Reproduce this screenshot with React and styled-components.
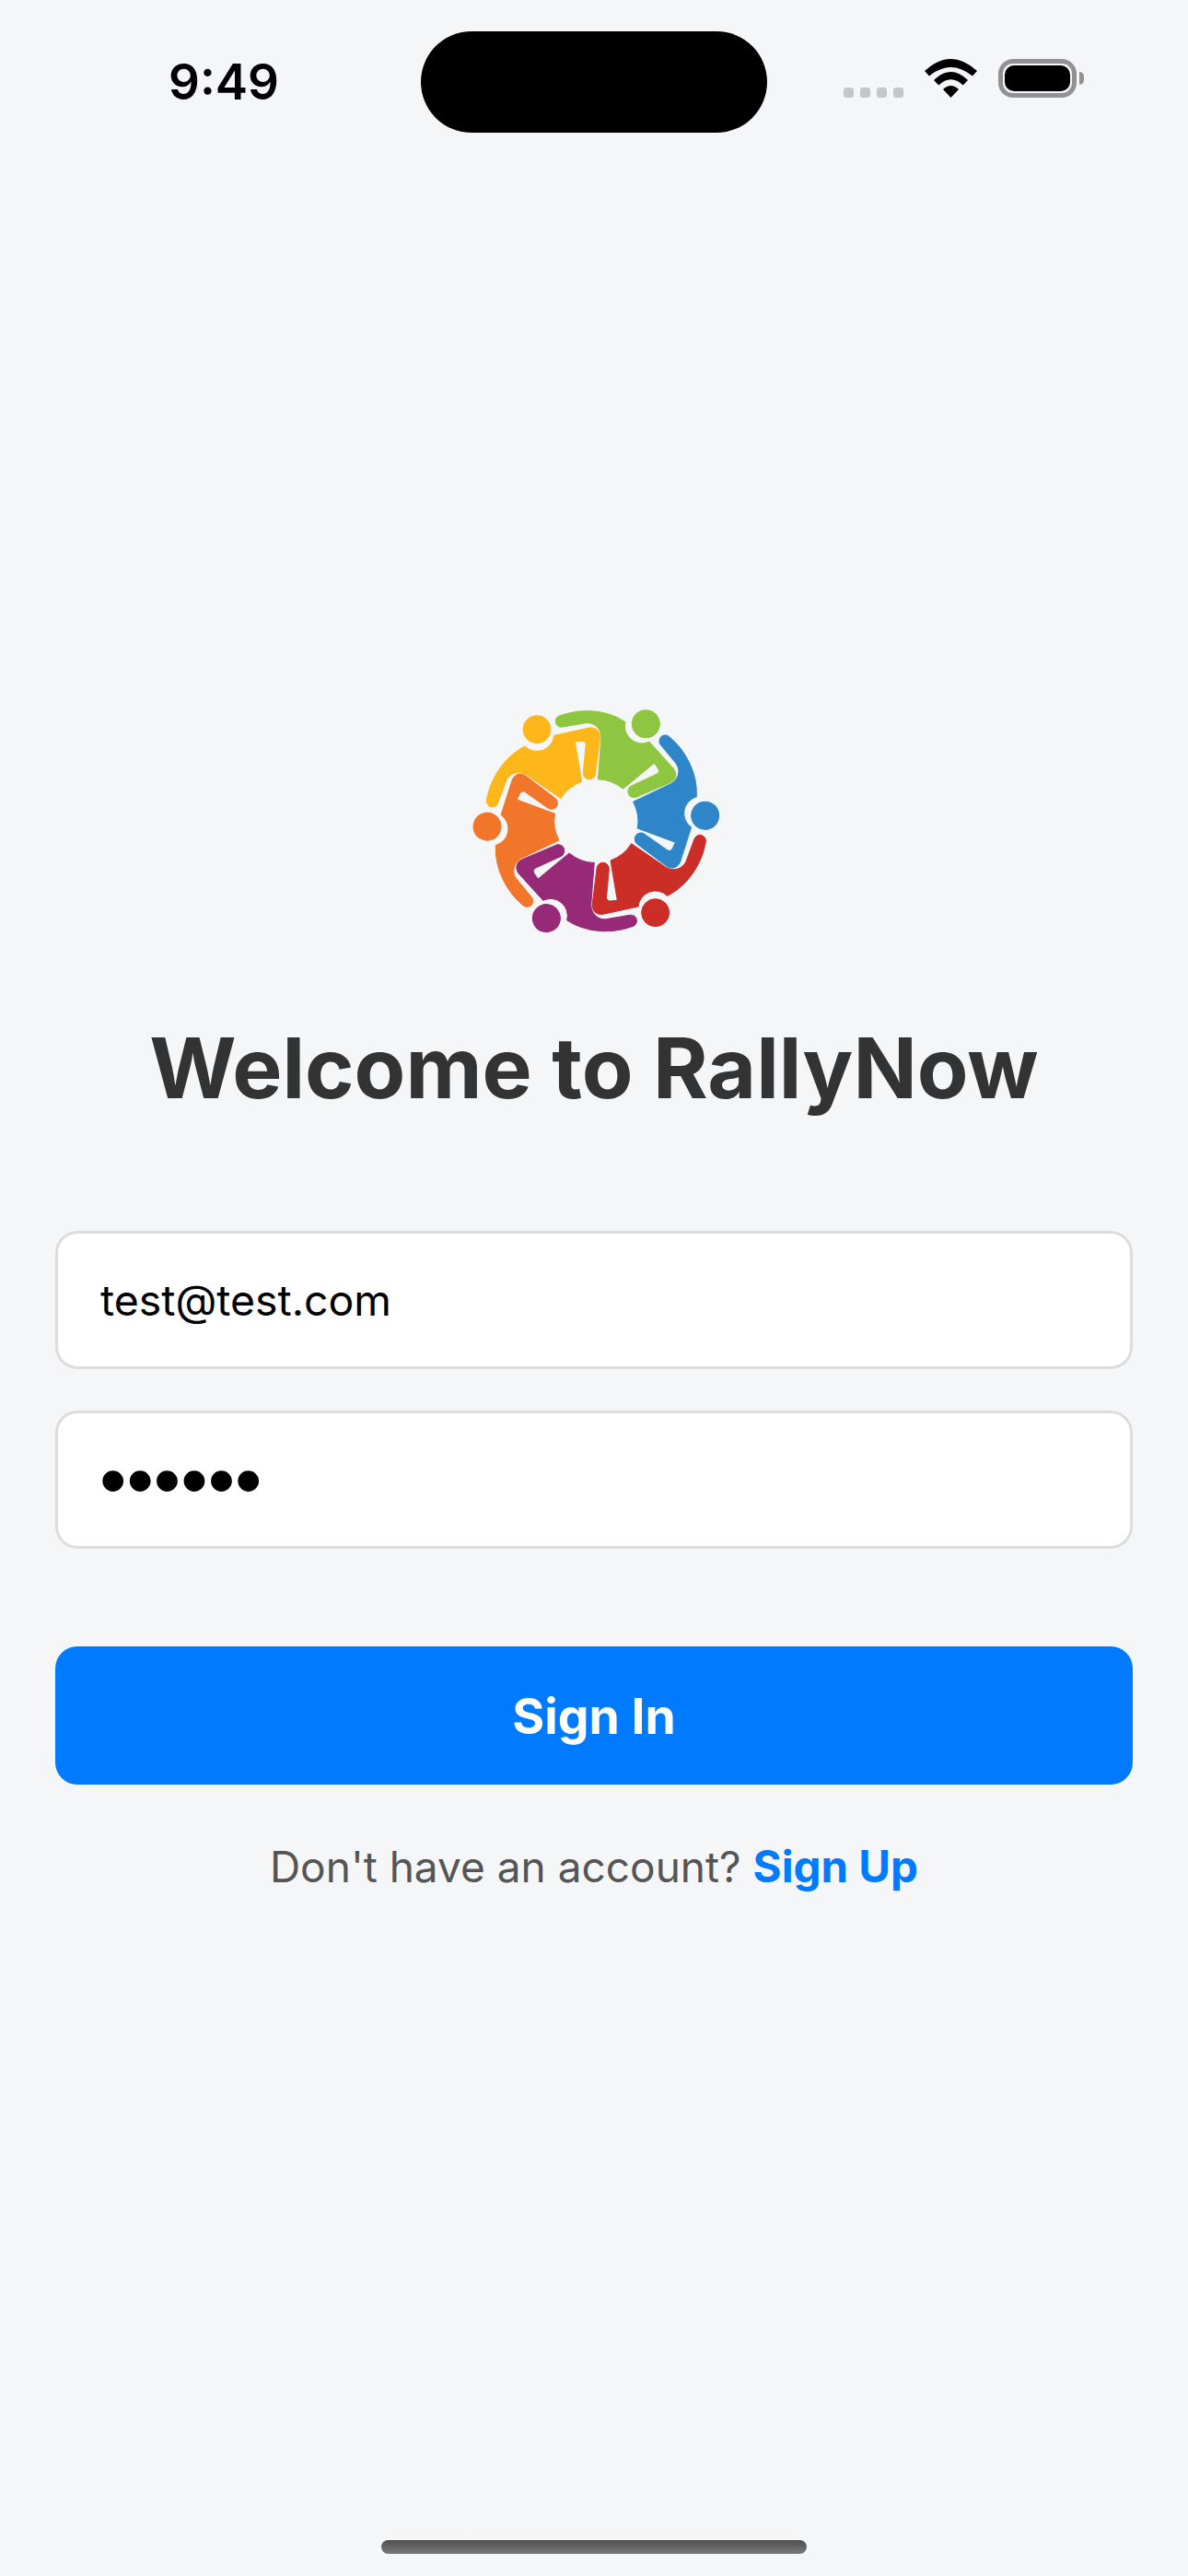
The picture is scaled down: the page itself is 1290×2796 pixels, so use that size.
import styled, { createGlobalStyle } from 'styled-components';

const GlobalStyle = createGlobalStyle`
    html, body {
        margin: 0;
        padding: 0;
        background-color: #f5f6f8;
    }
`;

const Page = styled.div`
    display: flex;
    flex-direction: column;
    width: 1290px;
    height: 2796px;
    background-color: #f5f6f8;
    font-family: Inter, "Liberation Sans", sans-serif;
    overflow: hidden;
`;

const StatusBar = styled.div`
    display: grid;
    grid-template-columns: 457px 376px 1fr;
    align-items: center;
    margin-top: 34px;
    height: 110px;
`;

const Time = styled.div`
    padding-left: 183px;
    font-size: 53px;
    font-weight: 600;
    line-height: 102px;
    color: #000;
`;

const Island = styled.div`
    height: 110px;
    border-radius: 55px;
    background-color: #000;
`;

const StatusIcons = styled.div`
    display: flex;
    align-items: flex-end;
    padding: 0 0 0 83px;
    height: 42px;
    margin-top: -8px;
`;

const SignalDots = styled.div`
    display: flex;
    gap: 7px;
    margin-right: 23px;
`;

const SignalDot = styled.span`
    width: 11px;
    height: 11px;
    border-radius: 3px;
    background-color: #c6c6c8;
`;

const Battery = styled.div`
    display: flex;
    align-items: center;
    margin-left: 23px;
`;

const BatteryBody = styled.div`
    box-sizing: border-box;
    width: 85px;
    height: 42px;
    padding: 2px;
    border: 5px solid #929294;
    border-radius: 16px;
`;

const BatteryFill = styled.div`
    height: 100%;
    border-radius: 10px;
    background-color: #000;
`;

const BatteryNub = styled.div`
    width: 5px;
    height: 14px;
    margin-left: 3px;
    border-radius: 0 5px 5px 0;
    background-color: #929294;
`;

const Main = styled.main`
    display: flex;
    flex-direction: column;
    align-items: center;
    padding: 606px 60px 0;
`;

const Logo = styled.svg`
    display: block;
    width: 310px;
    height: 280px;
`;

const Title = styled.h1`
    margin: 75px 0 0;
    font-size: 91px;
    font-weight: 700;
    line-height: 108px;
    color: #333;
`;

const Form = styled.form`
    display: flex;
    flex-direction: column;
    width: 100%;
    margin-top: 123px;
`;

const Input = styled.input`
    box-sizing: border-box;
    width: 100%;
    height: 150px;
    padding: 0 46px;
    border: 3px solid #dddddf;
    border-radius: 24px;
    outline: none;
    background-color: #fff;
    font-family: Inter, "Liberation Sans", sans-serif;
    font-size: 46.4px;
    color: #000;

    & + & {
        margin-top: 45px;
    }

    &[type='password'] {
        padding: 0 45px;
        font-family: "Liberation Sans", sans-serif;
        font-size: 84px;
    }
`;

const SubmitButton = styled.button`
    height: 150px;
    margin-top: 106px;
    border: none;
    border-radius: 24px;
    background-color: #007aff;
    font-family: Inter, "Liberation Sans", sans-serif;
    font-size: 53.5px;
    font-weight: 700;
    color: #fff;
`;

const Footer = styled.p`
    margin: 59px 0 0;
    font-size: 46px;
    line-height: 60px;
    color: #555;
`;

const SignUp = styled.a`
    font-size: 47.5px;
    font-weight: 700;
    color: #007aff;
`;

const HomeIndicator = styled.div`
    align-self: center;
    width: 462px;
    height: 15px;
    margin-top: auto;
    margin-bottom: 24px;
    border-radius: 8px;
    background: linear-gradient(#4e4e4e, #7a7a7a);
`;

const figurePath =
    'M115 358 C125 290 170 215 240 180 A56 56 0 0 0 335 145 L450 120 C475 117 487 135 484 155 L470 268 A20 20 0 0 1 430 268 L438 180 C440 168 434 163 425 163 L403 165 L425 295 A136 136 0 0 0 357 350 L255 280 C225 255 190 265 178 295 L152 365 A19 19 0 0 1 115 358 Z';

const figures = [
    { color: '#fdb71a', angle: 0 },
    { color: '#8fc641', angle: 60 },
    { color: '#2e86c8', angle: 120 },
    { color: '#cb2e26', angle: 180 },
    { color: '#962a76', angle: 240 },
    { color: '#f1762a', angle: 300 },
];

const RallyLogo = () => (
    <Logo viewBox="0 0 930 840" aria-label="RallyNow logo">
        {figures.map((figure) => (
            <g
                key={figure.angle}
                fill={figure.color}
                stroke={figure.color}
                strokeWidth="3"
                strokeLinejoin="round"
                transform={`rotate(${figure.angle} 472 423.5)`}
            >
                <circle cx="279" cy="125" r="45" />
                <path d={figurePath} />
            </g>
        ))}
    </Logo>
);

const Wifi = () => (
    <svg width="57" height="42" viewBox="0 0 57 42">
        <path d="M0 13 Q28.5 -13 57 13 L52 18.5 Q28.5 -0.5 5 18.5 Z" fill="#000" />
        <path d="M10 23 Q28.5 5 47 23 L41.7 28.5 Q28.5 16 15.3 28.5 Z" fill="#000" />
        <path d="M20 33 Q28.5 25 37 33 L28.5 42 Z" fill="#000" />
    </svg>
);

const App = () => {
    return (
        <Page>
            <GlobalStyle />
            <StatusBar>
                <Time>9:49</Time>
                <Island />
                <StatusIcons>
                    <SignalDots>
                        <SignalDot />
                        <SignalDot />
                        <SignalDot />
                        <SignalDot />
                    </SignalDots>
                    <Wifi />
                    <Battery>
                        <BatteryBody>
                            <BatteryFill />
                        </BatteryBody>
                        <BatteryNub />
                    </Battery>
                </StatusIcons>
            </StatusBar>
            <Main>
                <RallyLogo />
                <Title>Welcome to RallyNow</Title>
                <Form>
                    <Input type="email" defaultValue="test@test.com" />
                    <Input type="password" defaultValue="123456" />
                    <SubmitButton type="button">Sign In</SubmitButton>
                </Form>
                <Footer>
                    Don't have an account? <SignUp>Sign Up</SignUp>
                </Footer>
            </Main>
            <HomeIndicator />
        </Page>
    );
};

export default App;
